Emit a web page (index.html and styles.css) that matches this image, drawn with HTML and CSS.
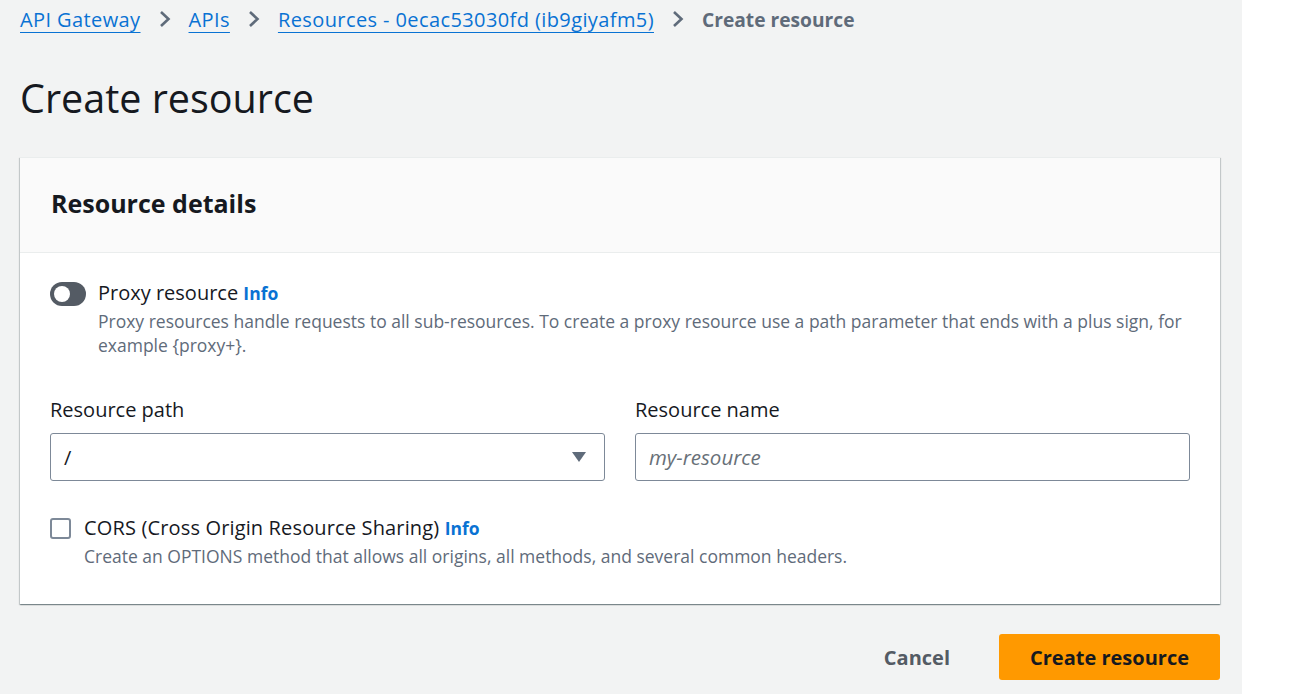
FILE: index.html
```html
<!DOCTYPE html>
<html lang="en">
<head>
<meta charset="utf-8">
<title>Create resource</title>
<link rel="stylesheet" href="styles.css">
</head>
<body>
<div class="page">
  <main class="main">
    <nav class="crumbs">
      <a class="crumb-link" href="#">API Gateway</a>
      <svg class="chev" viewBox="0 0 12 18" width="12" height="18"><path d="M2 2l7.5 7-7.5 7" fill="none" stroke="#5f6b7a" stroke-width="2.6"/></svg>
      <a class="crumb-link" href="#">APIs</a>
      <svg class="chev" viewBox="0 0 12 18" width="12" height="18"><path d="M2 2l7.5 7-7.5 7" fill="none" stroke="#5f6b7a" stroke-width="2.6"/></svg>
      <a class="crumb-link" href="#">Resources - 0ecac53030fd (ib9giyafm5)</a>
      <svg class="chev" viewBox="0 0 12 18" width="12" height="18"><path d="M2 2l7.5 7-7.5 7" fill="none" stroke="#5f6b7a" stroke-width="2.6"/></svg>
      <span class="crumb-current">Create resource</span>
    </nav>
    <h1 class="title">Create resource</h1>
    <section class="card">
      <header class="card-head">
        <h2 class="card-title">Resource details</h2>
      </header>
      <div class="card-body">
        <div class="toggle-row">
          <span class="toggle"><span class="knob"></span></span>
          <div class="toggle-text">
            <div class="opt-label">Proxy resource <a class="info" href="#">Info</a></div>
            <div class="opt-desc">Proxy resources handle requests to all sub-resources. To create a proxy resource use a path parameter that ends with a plus sign, for example {proxy+}.</div>
          </div>
        </div>
        <div class="fields">
          <div class="field">
            <label class="field-label">Resource path</label>
            <div class="select">
              <span class="select-value">/</span>
              <svg class="caret" viewBox="0 0 16 12" width="16" height="12"><path d="M1 1h14L8 11z" fill="#5f6b7a"/></svg>
            </div>
          </div>
          <div class="field">
            <label class="field-label">Resource name</label>
            <div class="input"><span class="placeholder">my-resource</span></div>
          </div>
        </div>
        <div class="check-row">
          <span class="checkbox"></span>
          <div class="check-text">
            <div class="opt-label cors">CORS (Cross Origin Resource Sharing) <a class="info" href="#">Info</a></div>
            <div class="opt-desc">Create an OPTIONS method that allows all origins, all methods, and several common headers.</div>
          </div>
        </div>
      </div>
    </section>
    <div class="actions">
      <button class="btn-link">Cancel</button>
      <button class="btn-primary">Create resource</button>
    </div>
  </main>
  <aside class="side"></aside>
</div>
</body>
</html>
```
FILE: styles.css
```css
* { box-sizing: border-box; }
html, body { margin: 0; padding: 0; }
body {
  font-family: "Open Sans", "Noto Sans", Arial, sans-serif;
  color: #16191f;
  background: #ffffff;
  width: 1302px;
  height: 694px;
  overflow: hidden;
}
.page { display: flex; height: 694px; }
.main {
  width: 1242px;
  background: #f2f3f3;
  padding: 0 22px 0 20px;
}
.side { flex: 1; background: #ffffff; }

.crumbs {
  display: flex;
  align-items: center;
  height: 38px;
  font-size: 20px;
}
.crumb-link {
  color: #0972d3;
  text-decoration: underline;
  text-underline-offset: 5px;
  text-decoration-thickness: 1px;
  letter-spacing: 0.4px;
}
.chev { margin: 0 18px 0 18px; }
.crumb-current { color: #5f6b7a; font-weight: 700; font-size: 19.2px; }

.title {
  margin: 35px 0 0 0;
  font-size: 39.5px;
  font-weight: 400;
  line-height: 50px;
  color: #16191f;
}

.card {
  margin-top: 34px;
  background: #ffffff;
  box-shadow: 0 1px 1px 0 rgba(0,28,36,.3), 1px 1px 1px 0 rgba(0,28,36,.15), -1px 1px 1px 0 rgba(0,28,36,.15);
  border-top: 1px solid #eaeded;
}
.card-head {
  background: #fafafa;
  border-bottom: 1px solid #eaeded;
  height: 95px;
  padding: 28px 31px 0;
}
.card-title {
  margin: 0;
  font-size: 25px;
  font-weight: 700;
  line-height: 34px;
}
.card-body { padding: 27px 30px 36px; }

.toggle-row { display: flex; align-items: flex-start; }
.toggle {
  width: 36px;
  height: 24px;
  border-radius: 12px;
  background: #545b64;
  margin-top: 2px;
  margin-right: 12px;
  position: relative;
  flex: none;
}
.knob {
  position: absolute;
  left: 4px;
  top: 4px;
  width: 16px;
  height: 16px;
  border-radius: 50%;
  background: #ffffff;
}
.opt-label { font-size: 20px; line-height: 26px; }
.opt-label.cors { letter-spacing: 0.15px; }
.info { color: #0972d3; font-weight: 700; font-size: 17.5px; text-decoration: none; letter-spacing: 0; }
.opt-desc { font-size: 17.5px; line-height: 24px; color: #5f6b7a; margin-top: 3px; }

.fields {
  display: grid;
  grid-template-columns: 555px 555px;
  column-gap: 30px;
  margin-top: 40px;
}
.field-label { display: block; font-size: 20px; line-height: 26px; margin-bottom: 10px; }
.select, .input {
  height: 48px;
  border: 1px solid #7d8998;
  border-radius: 3px;
  background: #ffffff;
  display: flex;
  align-items: center;
  padding: 0 17px 0 13px;
}
.select { justify-content: space-between; }
.select-value { font-size: 20px; }
.placeholder { font-size: 20.5px; font-style: italic; color: #687078; }

.check-row { display: flex; align-items: flex-start; margin-top: 34px; }
.checkbox {
  width: 21px;
  height: 21px;
  border: 2px solid #7d8998;
  border-radius: 3px;
  margin-top: 3px;
  margin-right: 13px;
  flex: none;
}

.actions {
  display: flex;
  justify-content: flex-end;
  align-items: center;
  margin-top: 30px;
  gap: 49px;
}
.btn-link {
  background: none;
  border: none;
  font-family: inherit;
  font-size: 20px;
  font-weight: 700;
  color: #545b64;
  padding: 0;
}
.btn-primary {
  font-family: inherit;
  background: #ff9900;
  border: none;
  border-radius: 3px;
  height: 46px;
  width: 221px;
  font-size: 20px;
  font-weight: 700;
  color: #16191f;
}
```
